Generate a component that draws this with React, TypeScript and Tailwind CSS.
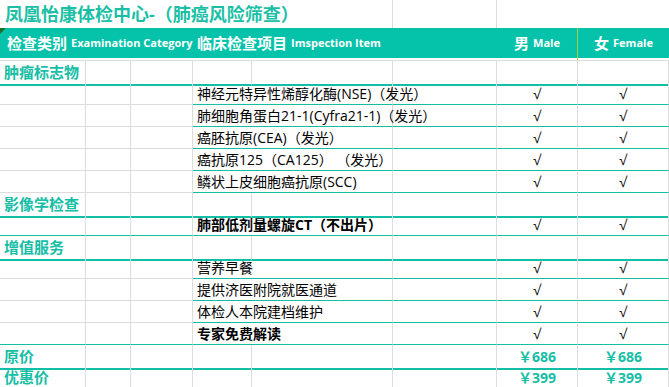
import React from "react";

const GRID = "grid grid-cols-[86px_45px_62px_59px_141px_104px_81px_91px]";
const FONT = { fontFamily: '"Open Sans", "Noto Sans CJK SC", sans-serif' };

function Blank({ teal = false }: { teal?: boolean }) {
  return (
    <div
      className={
        teal
          ? "border-r border-r-[#dcdcdc] border-b border-b-[#12bfa5]"
          : "border-r border-b border-[#dcdcdc]"
      }
    />
  );
}

function ItemRow({ name, bold = false, full = false }: { name: string; bold?: boolean; full?: boolean }) {
  const cell = "border-r border-r-[#dcdcdc] border-b border-b-[#12bfa5]";
  return (
    <div className={`${GRID} h-[22px]`}>
      <Blank teal={full} />
      <Blank teal={full} />
      <Blank teal={full} />
      <div
        className={`col-span-2 ${cell} flex items-center pl-[4px] whitespace-nowrap text-[14px] text-black ${
          bold ? "font-bold" : ""
        }`}
      >
        {name}
      </div>
      <div className={cell} />
      <div className={`${cell} flex items-center justify-center text-[14px] text-[#111]`}>√</div>
      <div className={`${cell} flex items-center justify-center text-[14px] text-[#111]`}>√</div>
    </div>
  );
}

function SectionRow({ label, h, top = false }: { label: string; h: string; top?: boolean }) {
  const cell = `border-r border-r-[#dcdcdc] border-b-2 border-b-[#10bfa5] ${top ? "border-t border-t-[#dcdcdc]" : ""}`;
  return (
    <div className={`${GRID} ${h}`}>
      <div className={`${cell} flex items-center pl-[4px] whitespace-nowrap text-[15px] font-bold text-[#16bea5]`}>
        {label}
      </div>
      <div className={cell} />
      <div className={cell} />
      <div className={cell} />
      <div className={cell} />
      <div className={cell} />
      <div className={cell} />
      <div className={cell} />
    </div>
  );
}

function PriceRow({ label, price, h }: { label: string; price: string; h: string }) {
  const cell = "border-r border-r-[#dcdcdc] border-b-2 border-b-[#10bfa5]";
  return (
    <div className={`${GRID} ${h}`}>
      <div className={`${cell} flex items-center pl-[4px] whitespace-nowrap text-[15px] font-bold text-[#16bea5]`}>
        {label}
      </div>
      <div className={cell} />
      <div className={cell} />
      <div className={cell} />
      <div className={cell} />
      <div className={cell} />
      <div className={`${cell} flex items-center justify-center text-[14px] font-bold text-[#16bea5]`}>￥{price}</div>
      <div className={`${cell} flex items-center justify-center text-[14px] font-bold text-[#16bea5]`}>￥{price}</div>
    </div>
  );
}

export default function App() {
  return (
    <div className="w-[669px] h-[387px] bg-white overflow-hidden flex flex-col" style={FONT}>
      {/* Title */}
      <div className={`${GRID} h-[28px]`}>
        <div className="col-span-5 border-r border-[#dcdcdc] flex items-center pl-[5px] whitespace-nowrap text-[18px] font-bold text-[#1cbfa6]">
          凤凰怡康体检中心-（肺癌风险筛查）
        </div>
        <div className="border-r border-[#dcdcdc]" />
        <div />
        <div />
      </div>

      {/* Header */}
      <div className={`${GRID} relative h-[30px] bg-[#05c3aa] text-white font-bold`}>
        <div className="absolute left-0 top-0 w-0 h-0 border-t-[6px] border-t-[#1f6f2a] border-r-[6px] border-r-transparent" />
        <div className="col-span-3 flex items-center pl-[7px] whitespace-nowrap">
          <span className="text-[15px]">检查类别</span>
          <span className="text-[11px] ml-[4px]">Examination Category</span>
        </div>
        <div className="col-span-3 flex items-center pl-[4px] whitespace-nowrap">
          <span className="text-[15px]">临床检查项目</span>
          <span className="text-[11px] ml-[4px]">Imspection Item</span>
        </div>
        <div className="border-r border-r-[#a4cf3a] flex items-center justify-center whitespace-nowrap">
          <span className="text-[15px]">男</span>
          <span className="text-[11px] ml-[4px]">Male</span>
        </div>
        <div className="flex items-center justify-center whitespace-nowrap">
          <span className="text-[15px]">女</span>
          <span className="text-[11px] ml-[4px]">Female</span>
        </div>
      </div>
      <div className={`${GRID} h-[2px]`}>
        <div className="col-span-7 border-r border-r-[#a4cf3a]" />
        <div />
      </div>

      <SectionRow label="肿瘤标志物" h="h-[23px]" top />
      <ItemRow name="神经元特异性烯醇化酶(NSE)（发光）" />
      <ItemRow name="肺细胞角蛋白21-1(Cyfra21-1)（发光）" />
      <ItemRow name="癌胚抗原(CEA)（发光）" />
      <ItemRow name="癌抗原125（CA125） （发光）" />
      <ItemRow name="鳞状上皮细胞癌抗原(SCC)" />
      <SectionRow label="影像学检查" h="h-[21px]" />
      <ItemRow name="肺部低剂量螺旋CT（不出片）" bold full />
      <SectionRow label="增值服务" h="h-[21px]" />
      <ItemRow name="营养早餐" />
      <ItemRow name="提供济医附院就医通道" />
      <ItemRow name="体检人本院建档维护" />
      <ItemRow name="专家免费解读" bold full />
      <PriceRow label="原价" price="686" h="h-[21px]" />
      <PriceRow label="优惠价" price="399" h="h-[21px]" />
    </div>
  );
}
